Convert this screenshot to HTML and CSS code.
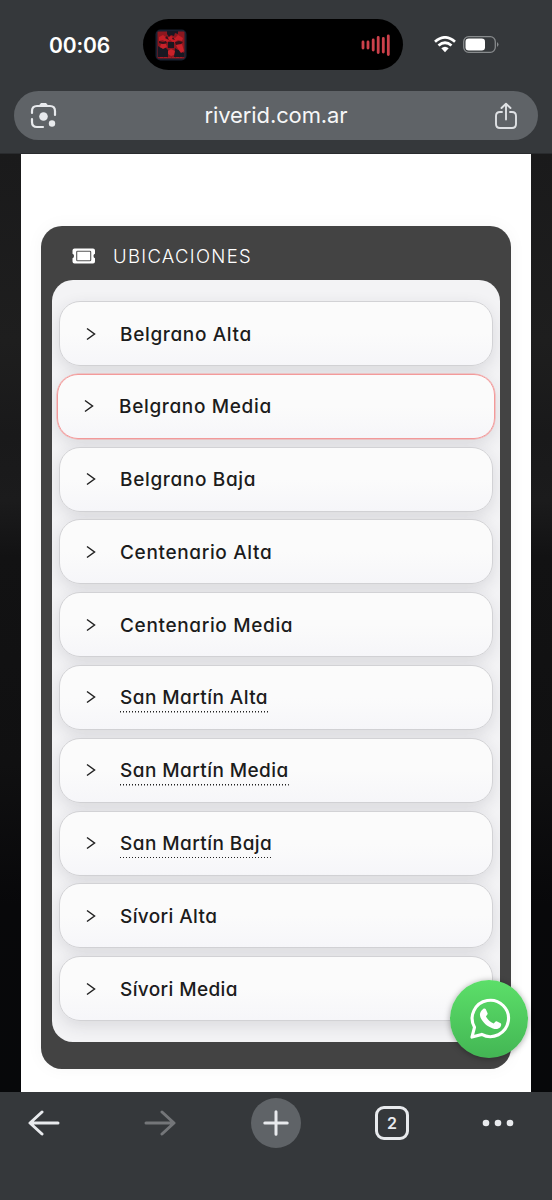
FILE: index.html
```html
<!DOCTYPE html>
<html lang="es">
<head>
<meta charset="utf-8">
<meta name="viewport" content="width=device-width">
<title>Ubicaciones</title>
<link rel="stylesheet" href="styles.css">
</head>
<body>
<header class="chrome">
  <div class="status">
    <span class="time">00:06</span>
    <div class="island">
      <svg class="art" width="32" height="32" viewBox="0 0 32 32">
        <rect x=".5" y=".5" width="31" height="31" rx="5" fill="#182131"/>
        <rect x="2.500" y="2.500" width="27" height="27" rx="1" fill="#8d171f"/>
        <path d="M12 2h11v3l-3-1-1 3-3-1-2 2-2-3z" fill="#171822"/>
        <path d="M4 8l4-2 4 3 4-2 4 2 3-3 5 3-1 3-4-1-4 3-4-3-4 3-3-3-4 1z" fill="#c41e26"/>
        <path d="M3 17l3 2 4-1 3 3v7H3zM20 19l3 2 2-1 3 4 1.500-1v5H19z" fill="#191822"/>
        <path d="M4 12l4 1 3-1 1 2-4 1-4-1zM20 13l4-1 4 1-2 2-5 1zM10 9l2-2 2 4zM18 8l2 3-3-1z" fill="#32131b"/>
        <path d="M6 15h5l1 3-4 2-3-2zM21 16l6-1 2 7-3 2-3-4zM13 22l3-2 4 2-1 4-3 1-3-2z" fill="#c9222a"/>
        <rect x="13" y="13" width="6" height="6" fill="#1b171f"/>
        <path d="M5 28.500h22" stroke="#a51c25" stroke-dasharray="3 1"/>
      </svg>
      <svg class="wave" width="30" height="22" viewBox="0 0 30 22" fill="none" stroke="#cc414b" stroke-width="2.800" stroke-linecap="round">
        <path d="M2 8v6M7 8v6M12.200 6v10M17.200 3.500v15M22.300 4.500v13.500M27.300 2v18.500"/>
      </svg>
    </div>
    <svg class="wifi" width="22" height="17" viewBox="0 0 22 17" fill="none" stroke="#fff" stroke-width="2.800">
      <path d="M1 5.700Q11-2.900 21 5.700M4.500 9.500Q11 4 17.500 9.500"/>
      <path d="M7.300 12.300Q11 9.200 14.700 12.300L11 16.200z" fill="#fff" stroke="none"/>
    </svg>
    <svg class="battery" width="36" height="17" viewBox="0 0 36 17">
      <rect x=".7" y=".7" width="31.600" height="15.600" rx="5" fill="none" stroke="#888b8d" stroke-width="1.300"/>
      <rect x="2.500" y="2.500" width="19.500" height="12" rx="3.300" fill="#fff"/>
      <path d="M34 6q3 2.500 0 5z" fill="#888b8d"/>
    </svg>
  </div>
  <div class="address">
    <svg width="27" height="27" viewBox="0 0 27 27" fill="none" stroke="#e8eaed" stroke-width="2.200" stroke-linecap="round">
      <path d="M2 11V9q0-5 5-5h13q5 0 5 5v4M2 17v3q0 5 5 5h6"/>
      <path d="M7 4.500l2-1.300L11 1h5l2 2.200 2 1.300z" fill="#e8eaed" stroke="none"/>
      <circle cx="13.500" cy="14.500" r="4.300" fill="#e8eaed" stroke="none"/>
      <circle cx="22" cy="21.500" r="3.200" fill="#e8eaed" stroke="none"/>
    </svg>
    <span class="url">riverid.com.ar</span>
    <svg width="24" height="28" viewBox="0 0 24 28" fill="none" stroke="#dfe1e4" stroke-width="1.900" stroke-linecap="round" stroke-linejoin="round">
      <path d="M8 10H6q-4 0-4 4v8q0 4 4 4h12q4 0 4-4v-8q0-4-4-4h-2M12 17.500V2M7.500 6L12 1.700 16.500 6"/>
    </svg>
  </div>
</header>
<main class="viewport">
  <div class="sheet">
    <section class="panel">
      <h1 class="heading">
        <svg width="24" height="16" viewBox="0 0 24 16">
          <path d="M2.500.5h18.500q2 0 2 2v3.300q-1.500.2-1.500 2.200t1.500 2.200v3.300q0 2-2 2H2.500q-2 0-2-2v-3.300Q2 10 2 8T.5 5.800V2.500q0-2 2-2z" fill="#fff"/>
          <rect x="4.700" y="3.200" width="14" height="9.600" rx=".8" fill="#fff" stroke="#555" stroke-width="1.100"/>
        </svg>
        <span>UBICACIONES</span>
      </h1>
      <ul class="list">
        <li class="row"><svg class="chev" viewBox="0 0 10 14"><path d="M1 1.500L8.500 7 1 12.500"/></svg><span class="name wide">Belgrano Alta</span></li>
        <li class="row selected"><svg class="chev" viewBox="0 0 10 14"><path d="M1 1.500L8.500 7 1 12.500"/></svg><span class="name wide">Belgrano Media</span></li>
        <li class="row"><svg class="chev" viewBox="0 0 10 14"><path d="M1 1.500L8.500 7 1 12.500"/></svg><span class="name wide">Belgrano Baja</span></li>
        <li class="row"><svg class="chev" viewBox="0 0 10 14"><path d="M1 1.500L8.500 7 1 12.500"/></svg><span class="name wide">Centenario Alta</span></li>
        <li class="row"><svg class="chev" viewBox="0 0 10 14"><path d="M1 1.500L8.500 7 1 12.500"/></svg><span class="name wide">Centenario Media</span></li>
        <li class="row"><svg class="chev" viewBox="0 0 10 14"><path d="M1 1.500L8.500 7 1 12.500"/></svg><span class="name dotted">San Martín Alta</span></li>
        <li class="row"><svg class="chev" viewBox="0 0 10 14"><path d="M1 1.500L8.500 7 1 12.500"/></svg><span class="name dotted">San Martín Media</span></li>
        <li class="row"><svg class="chev" viewBox="0 0 10 14"><path d="M1 1.500L8.500 7 1 12.500"/></svg><span class="name dotted">San Martín Baja</span></li>
        <li class="row"><svg class="chev" viewBox="0 0 10 14"><path d="M1 1.500L8.500 7 1 12.500"/></svg><span class="name">Sívori Alta</span></li>
        <li class="row"><svg class="chev" viewBox="0 0 10 14"><path d="M1 1.500L8.500 7 1 12.500"/></svg><span class="name">Sívori Media</span></li>
      </ul>
    </section>
  </div>
  <div class="whatsapp">
    <svg width="41" height="41" viewBox="0 0 42 42">
      <path d="M2 40l2.600-10A18.600 18.600 0 1 1 12 37.300z" fill="none" stroke="#fff" stroke-width="3.200" stroke-linejoin="round"/>
      <path d="M13.500 11.200c.5-.5 2.200-.7 2.700.3l1.800 4.200c.3 1-.3 1.600-1.700 3.200 2 3.500 4.300 5.500 8 7.200 1.300-1.400 1.900-2.600 2.900-2.200l4.200 2c1 .6.500 3-.4 4-1.800 2-4.700 2.300-7.500 1.300-6.300-2.200-10-5.800-12.500-10.700-1.700-3.400-.8-6.800 2.500-9.300z" fill="#fff"/>
    </svg>
  </div>
</main>
<nav class="toolbar">
  <svg width="32" height="26" viewBox="0 0 32 26" class="stroke back"><path d="M14 2L2 13l12 11M2.500 13H30"/></svg>
  <svg width="32" height="26" viewBox="0 0 32 26" class="stroke forward"><path d="M18 2l12 11-12 11M2 13h27.500"/></svg>
  <span class="plus"><svg width="26" height="26" viewBox="0 0 26 26" class="stroke"><path d="M13 1.800v22.400M1.800 13h22.400"/></svg></span>
  <span class="tabs">2</span>
  <svg width="32" height="8" viewBox="0 0 32 8" fill="#e8eaed"><circle cx="4" cy="4" r="3.300"/><circle cx="16" cy="4" r="3.300"/><circle cx="28" cy="4" r="3.300"/></svg>
</nav>
</body>
</html>
```

FILE: styles.css
```css
* { box-sizing: border-box; }
body {
  margin: 0;
  width: 552px;
  height: 1200px;
  overflow: hidden;
  display: flex;
  flex-direction: column;
  background: #35383b;
  font-family: Inter, "Noto Sans", sans-serif;
}
svg { display: block; flex: none; }

.chrome { height: 154px; flex: none; background: #35383b; border-bottom: 1px solid #292b2e; }
.status { display: flex; align-items: center; padding: 19px 0 0 49px; color: #fff; }
.time { width: 94px; font-size: 21px; font-weight: 600; letter-spacing: -.1px; padding-top: 1px; }
.island {
  width: 260px; height: 51px; border-radius: 26px; background: #000;
  display: flex; align-items: center; justify-content: space-between; padding: 0 12px;
}
.wifi { margin-left: 31px; }
.battery { margin-left: 7px; }
.address {
  margin: 21px 14px 0; height: 49px; border-radius: 25px; background: #5f6367;
  display: flex; align-items: center; justify-content: space-between; padding: 0 20px 0 16px;
  color: #f6f7f8;
}
.url { font-size: 22px; letter-spacing: -.1px; padding: 0 0 2px 1px; }

.viewport {
  position: relative; height: 938px; flex: none; padding: 0 21px;
  background: linear-gradient(#1a1a1b 0, #1e1e1e 20%, #19191a 30%, #1b1b1c 37%, #121213 43%, #101011 65%, #08080a 80%, #07080a);
}
.sheet { height: 938px; background: #fff; padding: 72px 20px 0; }
.panel {
  width: 470px; height: 843px; padding: 0 11px; border-radius: 21px; background: #434343;
  box-shadow: 0 0 18px rgba(30, 30, 50, .04);
}
.heading {
  margin: 0; height: 54px; display: flex; align-items: center; gap: 17px;
  padding: 5px 0 0 20px; color: #fff;
  font-size: 18.500px; font-weight: 300; letter-spacing: 1.300px;
}
.list {
  list-style: none; margin: 0; padding: 21px 7px 0; width: 448px; height: 762px;
  border-radius: 21px; overflow: hidden;
  display: flex; flex-direction: column; gap: 7.800px;
  background: #f3f3f5;
}
.row {
  height: 65px; flex: none; display: flex; align-items: center; gap: 24px;
  padding: 0 26px; border: 1px solid #d2d2d5; border-radius: 21px;
  background: linear-gradient(#fbfbfb 50%, #f6f6f9);
  box-shadow: 0 5px 16px rgba(40, 40, 55, .12);
}
.row.selected {
  margin: 0 -2px; border-color: #f39a9a;
  box-shadow: 0 0 0 .5px #f3a5a5, 0 5px 16px rgba(40, 40, 55, .12);
}
.row.selected .name { margin-left: 1px; }
.chev { width: 10px; height: 14px; fill: none; stroke: #222; stroke-width: 1.500; }
.name {
  color: #1c1c1c; font-size: 19px; font-weight: 500; line-height: 27px;
  font-feature-settings: "cv11"; white-space: nowrap;
  letter-spacing: .380px; padding-top: 1px;
}
.wide { letter-spacing: .650px; }
.dotted {
  line-height: 26px; margin-top: 2px; padding-bottom: 1.500px; letter-spacing: .430px;
  background: repeating-linear-gradient(90deg, #222 0 1.500px, transparent 1.500px 3px) bottom / 100% 1.500px no-repeat;
}

.whatsapp {
  position: absolute; left: 450px; top: 826px; width: 78px; height: 78px;
  border-radius: 50%; background: linear-gradient(#5cdf69, #43b654);
  box-shadow: 0 1px 6px rgba(0, 0, 0, .35);
  display: flex; align-items: center; justify-content: center; padding: 0 0 2px 2px;
}

.toolbar {
  flex: 1; background: #35383b; display: grid; grid-template-columns: repeat(4, 116px) 96px;
  align-items: center; justify-items: center; justify-content: start; margin-left: -14px; padding: 0 0 46px;
}
.stroke { fill: none; stroke: #e8eaed; stroke-width: 3; stroke-linecap: round; stroke-linejoin: round; }
.forward { stroke: #747679; }
.plus {
  width: 50px; height: 50px; border-radius: 50%; background: #5f6367;
  display: flex; align-items: center; justify-content: center;
}
.tabs {
  width: 34px; height: 34px; border: 3px solid #e8eaed; border-radius: 9px;
  display: flex; align-items: center; justify-content: center;
  color: #e8eaed; font-size: 16px; font-weight: 600;
}
```
